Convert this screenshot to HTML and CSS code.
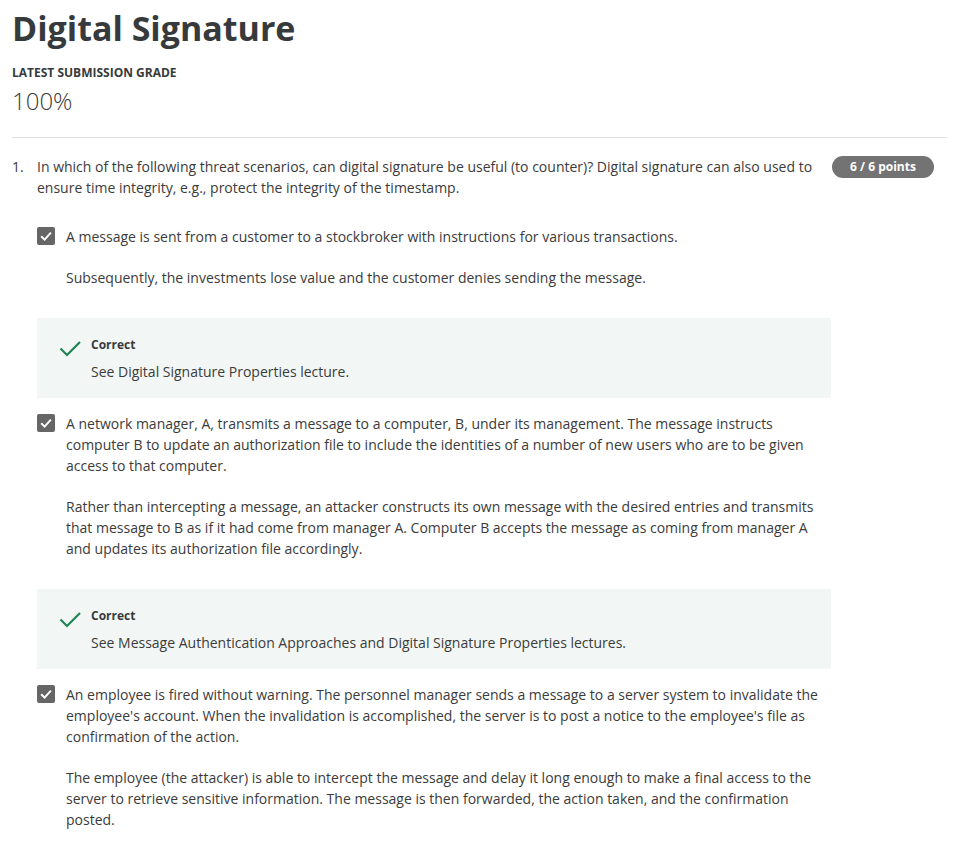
FILE: index.html
```html
<!DOCTYPE html>
<html lang="en">
<head>
<meta charset="utf-8">
<title>Digital Signature</title>
<link rel="stylesheet" href="styles.css">
</head>
<body>
<main class="page">
  <h1 class="title">Digital Signature</h1>
  <div class="grade-label">LATEST SUBMISSION GRADE</div>
  <div class="grade">100%</div>
  <hr class="divider">

  <section class="question">
    <div class="q-head">
      <span class="q-num">1.</span>
      <p class="q-text">In which of the following threat scenarios, can digital signature be useful (to counter)? Digital signature can also used to ensure time integrity, e.g., protect the integrity of the timestamp.</p>
      <span class="badge">6 / 6 points</span>
    </div>

    <div class="answers">
      <div class="option">
        <span class="checkbox"><svg viewBox="0 0 18 18" width="18" height="18"><path d="M4.2 9.3 L7.6 12.6 L13.9 5.6" fill="none" stroke="#fff" stroke-width="2"/></svg></span>
        <div class="option-text">
          <p>A message is sent from a customer to a stockbroker with instructions for various transactions.</p>
          <p>Subsequently, the investments lose value and the customer denies sending the message.</p>
        </div>
      </div>
      <div class="feedback">
        <svg class="feedback-icon" viewBox="0 0 24 24" width="24" height="24"><path d="M2.5 12.5 L9 19 L22 6" fill="none" stroke="#1f8354" stroke-width="2.2"/></svg>
        <div class="feedback-body">
          <div class="feedback-title">Correct</div>
          <p class="feedback-text">See Digital Signature Properties lecture.</p>
        </div>
      </div>

      <div class="option">
        <span class="checkbox"><svg viewBox="0 0 18 18" width="18" height="18"><path d="M4.2 9.3 L7.6 12.6 L13.9 5.6" fill="none" stroke="#fff" stroke-width="2"/></svg></span>
        <div class="option-text">
          <p>A network manager, A, transmits a message to a computer, B, under its management. The message instructs computer B to update an authorization file to include the identities of a number of new users who are to be given access to that computer.</p>
          <p>Rather than intercepting a message, an attacker constructs its own message with the desired entries and transmits that message to B as if it had come from manager A. Computer B accepts the message as coming from manager A and updates its authorization file accordingly.</p>
        </div>
      </div>
      <div class="feedback">
        <svg class="feedback-icon" viewBox="0 0 24 24" width="24" height="24"><path d="M2.5 12.5 L9 19 L22 6" fill="none" stroke="#1f8354" stroke-width="2.2"/></svg>
        <div class="feedback-body">
          <div class="feedback-title">Correct</div>
          <p class="feedback-text">See Message Authentication Approaches and Digital Signature Properties lectures.</p>
        </div>
      </div>

      <div class="option">
        <span class="checkbox"><svg viewBox="0 0 18 18" width="18" height="18"><path d="M4.2 9.3 L7.6 12.6 L13.9 5.6" fill="none" stroke="#fff" stroke-width="2"/></svg></span>
        <div class="option-text">
          <p>An employee is fired without warning. The personnel manager sends a message to a server system to invalidate the employee's account. When the invalidation is accomplished, the server is to post a notice to the employee's file as confirmation of the action.</p>
          <p>The employee (the attacker) is able to intercept the message and delay it long enough to make a final access to the server to retrieve sensitive information. The message is then forwarded, the action taken, and the confirmation posted.</p>
        </div>
      </div>
    </div>
  </section>
</main>
</body>
</html>
```

FILE: styles.css
```css
* { box-sizing: border-box; }

html, body {
  margin: 0;
  background: #ffffff;
}

body {
  font-family: "Open Sans", "Liberation Sans", sans-serif;
  color: #3b3b3b;
  font-size: 14px;
  line-height: 21px;
}

.page {
  padding: 0 9px 0 12px;
}

.title {
  margin: 0;
  padding-top: 6px;
  font-size: 34px;
  line-height: 44px;
  font-weight: 700;
  color: #373a3c;
  letter-spacing: 0;
}

.grade-label {
  margin-top: 15px;
  font-size: 12px;
  line-height: 16px;
  font-weight: 700;
  color: #373a3c;
}

.grade {
  margin-top: 4px;
  font-size: 24px;
  line-height: 32px;
  font-weight: 300;
  color: #3b3b3b;
}

.divider {
  margin: 20px 0 0;
  border: 0;
  border-top: 1px solid #e1e1e1;
  height: 0;
}

.question {
  padding-top: 18px;
}

.q-head {
  display: flex;
  align-items: flex-start;
}

.q-num {
  width: 25px;
  flex: none;
}

.q-text {
  margin: 0;
  width: 783px;
  flex: none;
}

.badge {
  margin-left: 12px;
  margin-top: 0;
  flex: none;
  width: 102px;
  height: 22px;
  border-radius: 11px;
  background: #737373;
  color: #ffffff;
  font-size: 12px;
  font-weight: 700;
  line-height: 22px;
  text-align: center;
}

.answers {
  margin-left: 25px;
  width: 794px;
  padding-top: 28px;
}

.option {
  display: flex;
  align-items: flex-start;
  gap: 11px;
}

.checkbox {
  flex: none;
  width: 18px;
  height: 18px;
  margin-top: 1px;
  border-radius: 2px;
  background: #666666;
  display: flex;
}

.option-text p {
  margin: 0 0 20px;
}

.option-text p:last-child {
  margin-bottom: 0;
}

.feedback {
  margin: 30px 0 15px;
  background: #f2f7f5;
  display: flex;
  align-items: flex-start;
  gap: 9px;
  padding: 16px 20px 16px 21px;
}

.feedback-icon {
  flex: none;
  margin-top: 2px;
}

.feedback-title {
  font-size: 12px;
  line-height: 22px;
  font-weight: 700;
  color: #373a3c;
}

.feedback-text {
  margin: 5px 0 0;
}
```
